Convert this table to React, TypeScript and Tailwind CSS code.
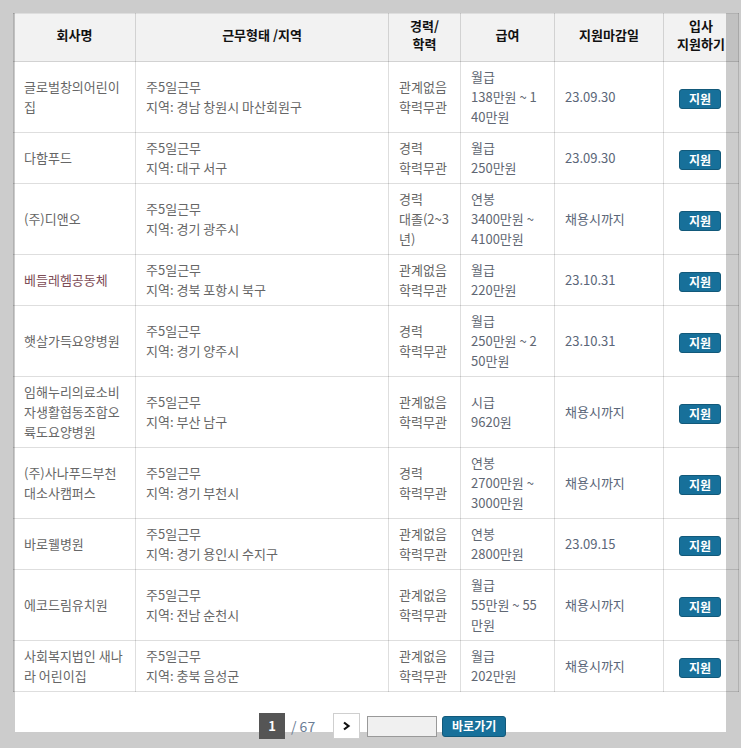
import React from "react"

type Job = {
  company: string[]
  work: string[]
  career: string[]
  pay: string[]
  deadline: string
  visited?: boolean
}

const jobs: Job[] = [
  { company: ["글로벌창의어린이", "집"], work: ["주5일근무", "지역: 경남 창원시 마산회원구"], career: ["관계없음", "학력무관"], pay: ["월급", "138만원 ~ 1", "40만원"], deadline: "23.09.30" },
  { company: ["다함푸드"], work: ["주5일근무", "지역: 대구 서구"], career: ["경력", "학력무관"], pay: ["월급", "250만원"], deadline: "23.09.30" },
  { company: ["(주)디앤오"], work: ["주5일근무", "지역: 경기 광주시"], career: ["경력", "대졸(2~3", "년)"], pay: ["연봉", "3400만원 ~", "4100만원"], deadline: "채용시까지" },
  { company: ["베들레헴공동체"], work: ["주5일근무", "지역: 경북 포항시 북구"], career: ["관계없음", "학력무관"], pay: ["월급", "220만원"], deadline: "23.10.31", visited: true },
  { company: ["햇살가득요양병원"], work: ["주5일근무", "지역: 경기 양주시"], career: ["경력", "학력무관"], pay: ["월급", "250만원 ~ 2", "50만원"], deadline: "23.10.31" },
  { company: ["임해누리의료소비", "자생활협동조합오", "륙도요양병원"], work: ["주5일근무", "지역: 부산 남구"], career: ["관계없음", "학력무관"], pay: ["시급", "9620원"], deadline: "채용시까지" },
  { company: ["(주)사나푸드부천", "대소사캠퍼스"], work: ["주5일근무", "지역: 경기 부천시"], career: ["경력", "학력무관"], pay: ["연봉", "2700만원 ~", "3000만원"], deadline: "채용시까지" },
  { company: ["바로웰병원"], work: ["주5일근무", "지역: 경기 용인시 수지구"], career: ["관계없음", "학력무관"], pay: ["연봉", "2800만원"], deadline: "23.09.15" },
  { company: ["에코드림유치원"], work: ["주5일근무", "지역: 전남 순천시"], career: ["관계없음", "학력무관"], pay: ["월급", "55만원 ~ 55", "만원"], deadline: "채용시까지" },
  { company: ["사회복지법인 새나", "라 어린이집"], work: ["주5일근무", "지역: 충북 음성군"], career: ["관계없음", "학력무관"], pay: ["월급", "202만원"], deadline: "채용시까지" },
]

function Lines({ lines }: { lines: string[] }) {
  return (
    <>
      {lines.map((l, i) => (
        <div key={i} className="whitespace-pre">
          {l}
        </div>
      ))}
    </>
  )
}

const th = "border border-[rgba(0,0,0,0.13)] bg-[rgba(0,0,0,0.05)] h-[48px] pb-[6px] text-center align-middle font-bold text-[13px] leading-[18px] text-[#111]"
const td = "border border-[rgba(0,0,0,0.13)] py-[5px] pl-[10px] pr-[2px] align-middle text-[13px] leading-[20px] text-[#666]"

export default function App() {
  return (
    <div className="h-[748px] bg-[#cccccc] pt-[14px] pl-[15px] overflow-hidden font-['Noto_Sans_CJK_KR',sans-serif]">
      <div className="w-[711px] h-[719px] bg-white">
        {/* job list */}
        <table className="-ml-[2px] -mt-[1px] w-[725px] table-fixed border-collapse">
          <colgroup>
            <col className="w-[122px]" />
            <col className="w-[253px]" />
            <col className="w-[72px]" />
            <col className="w-[94px]" />
            <col className="w-[109px]" />
            <col className="w-[75px]" />
          </colgroup>
          <thead>
            <tr>
              <th className={th}>회사명</th>
              <th className={th}>근무형태 /지역</th>
              <th className={th}>
                경력/
                <br />
                학력
              </th>
              <th className={th}>급여</th>
              <th className={th}>지원마감일</th>
              <th className={th}>
                입사
                <br />
                지원하기
              </th>
            </tr>
          </thead>
          <tbody>
            {jobs.map((job, i) => (
              <tr key={i}>
                <td className={td + (job.visited ? " !text-[#7d4c56]" : "")}>
                  <Lines lines={job.company} />
                </td>
                <td className={td}>
                  <Lines lines={job.work} />
                </td>
                <td className={td}>
                  <Lines lines={job.career} />
                </td>
                <td className={td + " !text-[#5f6773]"}>
                  <Lines lines={job.pay} />
                </td>
                <td className={td + " !text-[#5a6678]"}>{job.deadline}</td>
                <td className="border border-[rgba(0,0,0,0.13)] pr-[2px] text-center align-middle">
                  <button className="w-[42px] h-[20px] rounded-[3px] border border-[#12597a] bg-[#17709a] text-white text-[12px] font-bold leading-[18px]">
                    지원
                  </button>
                </td>
              </tr>
            ))}
          </tbody>
        </table>

        {/* paging */}
        <div className="mt-[21px] pl-[244px] flex items-center">
          <span className="w-[26px] h-[26px] bg-[#555] text-white text-[13px] font-bold flex items-center justify-center">1</span>
          <span className="ml-[6px] text-[14px] text-[#6b7d95]">/ 67</span>
          <button className="ml-[18px] w-[27px] h-[26px] border border-[#cfcfcf] bg-white flex items-center justify-center">
            <svg width="9" height="10" viewBox="0 0 9 10">
              <path d="M2 1.5 L6.5 5 L2 8.5" fill="none" stroke="#111" strokeWidth="2.2" />
            </svg>
          </button>
          <input className="ml-[7px] w-[70px] h-[21px] bg-[#f0f0f0] border border-[#999] outline-none" />
          <button className="ml-[5px] w-[64px] h-[21px] rounded-[3px] border border-[#12597a] bg-[#17709a] text-white text-[12px] font-bold leading-[18px]">
            바로가기
          </button>
        </div>
      </div>
    </div>
  )
}
